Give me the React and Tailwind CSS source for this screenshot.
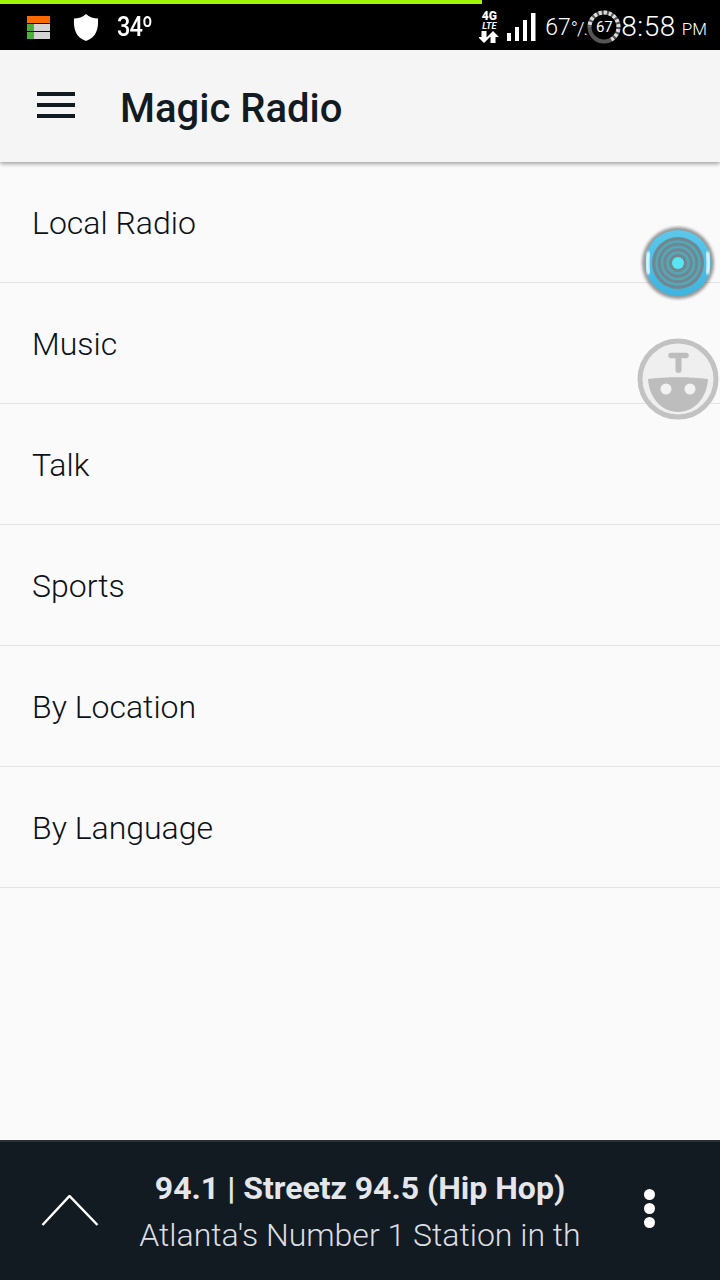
const ITEMS = ["Local Radio", "Music", "Talk", "Sports", "By Location", "By Language"];

function StatusBar() {
  return (
    <div className="relative h-[50px] shrink-0 bg-black text-white">
      <div className="h-1 w-[482px] bg-[#a2f500]" />
      <div className="flex h-[46px] items-center justify-between">
        <div className="flex items-center">
          <svg className="ml-[27px]" width="23" height="23" viewBox="0 0 23 23">
            <rect x="0" y="0" width="23" height="7" fill="#ff6a00" />
            <rect x="0" y="8" width="23" height="7" fill="#d4d4d4" />
            <rect x="0" y="8" width="7" height="7" fill="#4caf3a" />
            <rect x="0" y="16" width="23" height="7" fill="#d4d4d4" />
            <rect x="0" y="16" width="7" height="7" fill="#4caf3a" />
          </svg>
          <svg className="ml-[23px]" width="26" height="27" viewBox="0 0 26 27">
            <path d="M13 0C10 3 5 4.500 1 4.500C0.500 14 2 23 13 27C24 23 25.500 14 25 4.500C21 4.500 16 3 13 0Z" fill="#fff" />
          </svg>
          <span className="ml-[18px] origin-left font-['Roboto',sans-serif] text-[28px] font-medium leading-none tracking-[-1px] [transform:scaleX(0.84)]">34º</span>
        </div>
        <div className="flex items-center">
          <div className="mr-[8px] flex w-[20px] flex-col items-center">
            <span className="font-['Roboto',sans-serif] text-[12px] font-black leading-[11px]">4G</span>
            <span className="font-['Roboto',sans-serif] text-[9px] italic font-bold leading-[9px]">LTE</span>
            <svg width="20" height="12" viewBox="0 0 20 12">
              <path d="M6 12L0 6H3.500V0H8.500V6H12Z" fill="#fff" transform="translate(-1 0)" />
              <path d="M14 0L20 6H16.500V12H11.500V6H8Z" fill="#fff" />
            </svg>
          </div>
          <svg width="29" height="28" viewBox="0 0 29 28" fill="#fff">
            <rect x="0" y="20" width="4" height="8" />
            <rect x="8" y="14" width="4" height="14" />
            <rect x="16" y="7" width="4" height="21" />
            <rect x="24" y="0" width="4.500" height="28" />
          </svg>
          <div className="ml-[9px] flex w-[40px] items-baseline whitespace-nowrap font-['Roboto',sans-serif] font-light leading-none">
            <span className="text-[23px]">67</span>
            <span className="text-[19px] tracking-[-1px]">°/.</span>
          </div>
          <div className="relative ml-[2px] h-[34px] w-[34px]">
            <svg width="34" height="34" viewBox="0 0 34 34" fill="none">
              <circle cx="17" cy="17" r="14.500" stroke="#555" strokeWidth="4" />
              <path d="M24.250 29.560A14.500 14.500 0 1 0 2.500 17" stroke="#ddd" strokeWidth="4" strokeDasharray="3 2" />
            </svg>
            <span className="absolute inset-0 flex items-center justify-center font-['Roboto',sans-serif] text-[15px] font-normal leading-none">67</span>
          </div>
          <span className="font-['Roboto',sans-serif] text-[28px] font-light leading-none tracking-[0.5px]">8:58</span>
          <span className="ml-[6px] mr-[13px] mt-[4px] font-['Roboto',sans-serif] text-[17px] font-light leading-none">PM</span>
        </div>
      </div>
    </div>
  );
}

function Overlays() {
  return (
    <>
      <svg className="absolute left-[640px] top-[225px]" width="76" height="76" viewBox="0 0 76 76">
        <defs>
          <filter id="b" x="-20%" y="-20%" width="140%" height="140%"><feGaussianBlur stdDeviation="1.500" /></filter>
          <filter id="s" x="-50%" y="-50%" width="200%" height="200%"><feGaussianBlur stdDeviation="1.200" /></filter>
          <filter id="t" x="-10%" y="-10%" width="120%" height="120%"><feGaussianBlur stdDeviation="0.600" /></filter>
          <linearGradient id="rim" x1="0" y1="0" x2="0" y2="1">
            <stop offset="0" stopColor="#5cc8ec" />
            <stop offset="1" stopColor="#3fb4de" />
          </linearGradient>
        </defs>
        <circle cx="38" cy="38" r="36" fill="#444" opacity="0.55" filter="url(#b)" />
        <circle cx="38" cy="38" r="33" fill="url(#rim)" />
        <path d="M9 27C7 33 7 43 9 49" stroke="#e4f8fd" strokeWidth="4" fill="none" filter="url(#s)" />
        <path d="M67 27C69 33 69 43 67 49" stroke="#e4f8fd" strokeWidth="4" fill="none" filter="url(#s)" />
        <g filter="url(#t)">
          <circle cx="38" cy="38" r="26" fill="#6f8791" />
          <g fill="none" stroke="#55a8b8" strokeWidth="2.500">
            <circle cx="38" cy="38" r="10.500" />
            <circle cx="38" cy="38" r="16" />
            <circle cx="38" cy="38" r="21.500" />
          </g>
          <circle cx="38" cy="38" r="6" fill="#56e6f4" />
        </g>
      </svg>
      <svg className="absolute left-[637px] top-[338px]" width="82" height="82" viewBox="0 0 82 82">
        <circle cx="41" cy="41" r="38" fill="#efefef" stroke="#c2c2c2" strokeWidth="5" />
        <path d="M11 41C30 38.500 52 38.500 71 41C70 60 57 74 41 74C25 74 12 60 11 41Z" fill="#bdbdbd" />
        <path d="M34 17.500H49" stroke="#bdbdbd" strokeWidth="5.500" strokeLinecap="round" />
        <path d="M41.500 18V32" stroke="#bdbdbd" strokeWidth="6" strokeLinecap="round" />
        <circle cx="29" cy="51" r="5.500" fill="#f2f2f2" />
        <circle cx="53" cy="51" r="5.500" fill="#f2f2f2" />
      </svg>
    </>
  );
}

export default function App() {
  return (
    <div className="relative flex h-[1280px] w-[720px] flex-col overflow-hidden bg-[#fafafa] font-['Roboto',sans-serif]">
      <StatusBar />
      <header className="z-10 flex h-[112px] shrink-0 items-center bg-[#f5f5f5] shadow-[0_2px_4px_rgba(0,0,0,0.35)]">
        <div className="mb-[2px] ml-[37px] flex w-[38px] flex-col gap-[7px]">
          <div className="h-1 bg-[#121a22]" />
          <div className="h-1 bg-[#121a22]" />
          <div className="h-1 bg-[#121a22]" />
        </div>
        <h1 className="ml-[45px] mt-[5px] text-[40px] font-medium leading-none text-[#121a22]">Magic Radio</h1>
      </header>
      <ul className="flex-1">
        {ITEMS.map((t) => (
          <li key={t} className="flex h-[121px] items-center border-b border-[#e4e4e4] pl-[32px] pt-px text-[32px] font-light leading-none text-[#0c1218]">
            {t}
          </li>
        ))}
      </ul>
      <footer className="flex h-[140px] shrink-0 items-center border-t-2 border-[#2a3038] bg-[#121a22]">
        <svg className="ml-[41px] mb-[2px] shrink-0" width="58" height="31" viewBox="0 0 58 31" fill="none">
          <path d="M1.500 30L28.500 1L56.500 30" stroke="#fff" strokeWidth="2.500" />
        </svg>
        <div className="flex w-[522px] flex-col items-center">
          <div className="text-[32px] font-bold leading-[46px] text-[#e4e6ea]">94.1 | Streetz 94.5 (Hip Hop)</div>
          <div className="mt-px text-[32px] font-light leading-[46px] text-[#dcdee2]">Atlanta's Number 1 Station in th</div>
        </div>
        <div className="ml-[23px] flex flex-col gap-[3px] pb-[5px]">
          <div className="h-[11px] w-[11px] rounded-full bg-white" />
          <div className="h-[11px] w-[11px] rounded-full bg-white" />
          <div className="h-[11px] w-[11px] rounded-full bg-white" />
        </div>
      </footer>
      <Overlays />
    </div>
  );
}
